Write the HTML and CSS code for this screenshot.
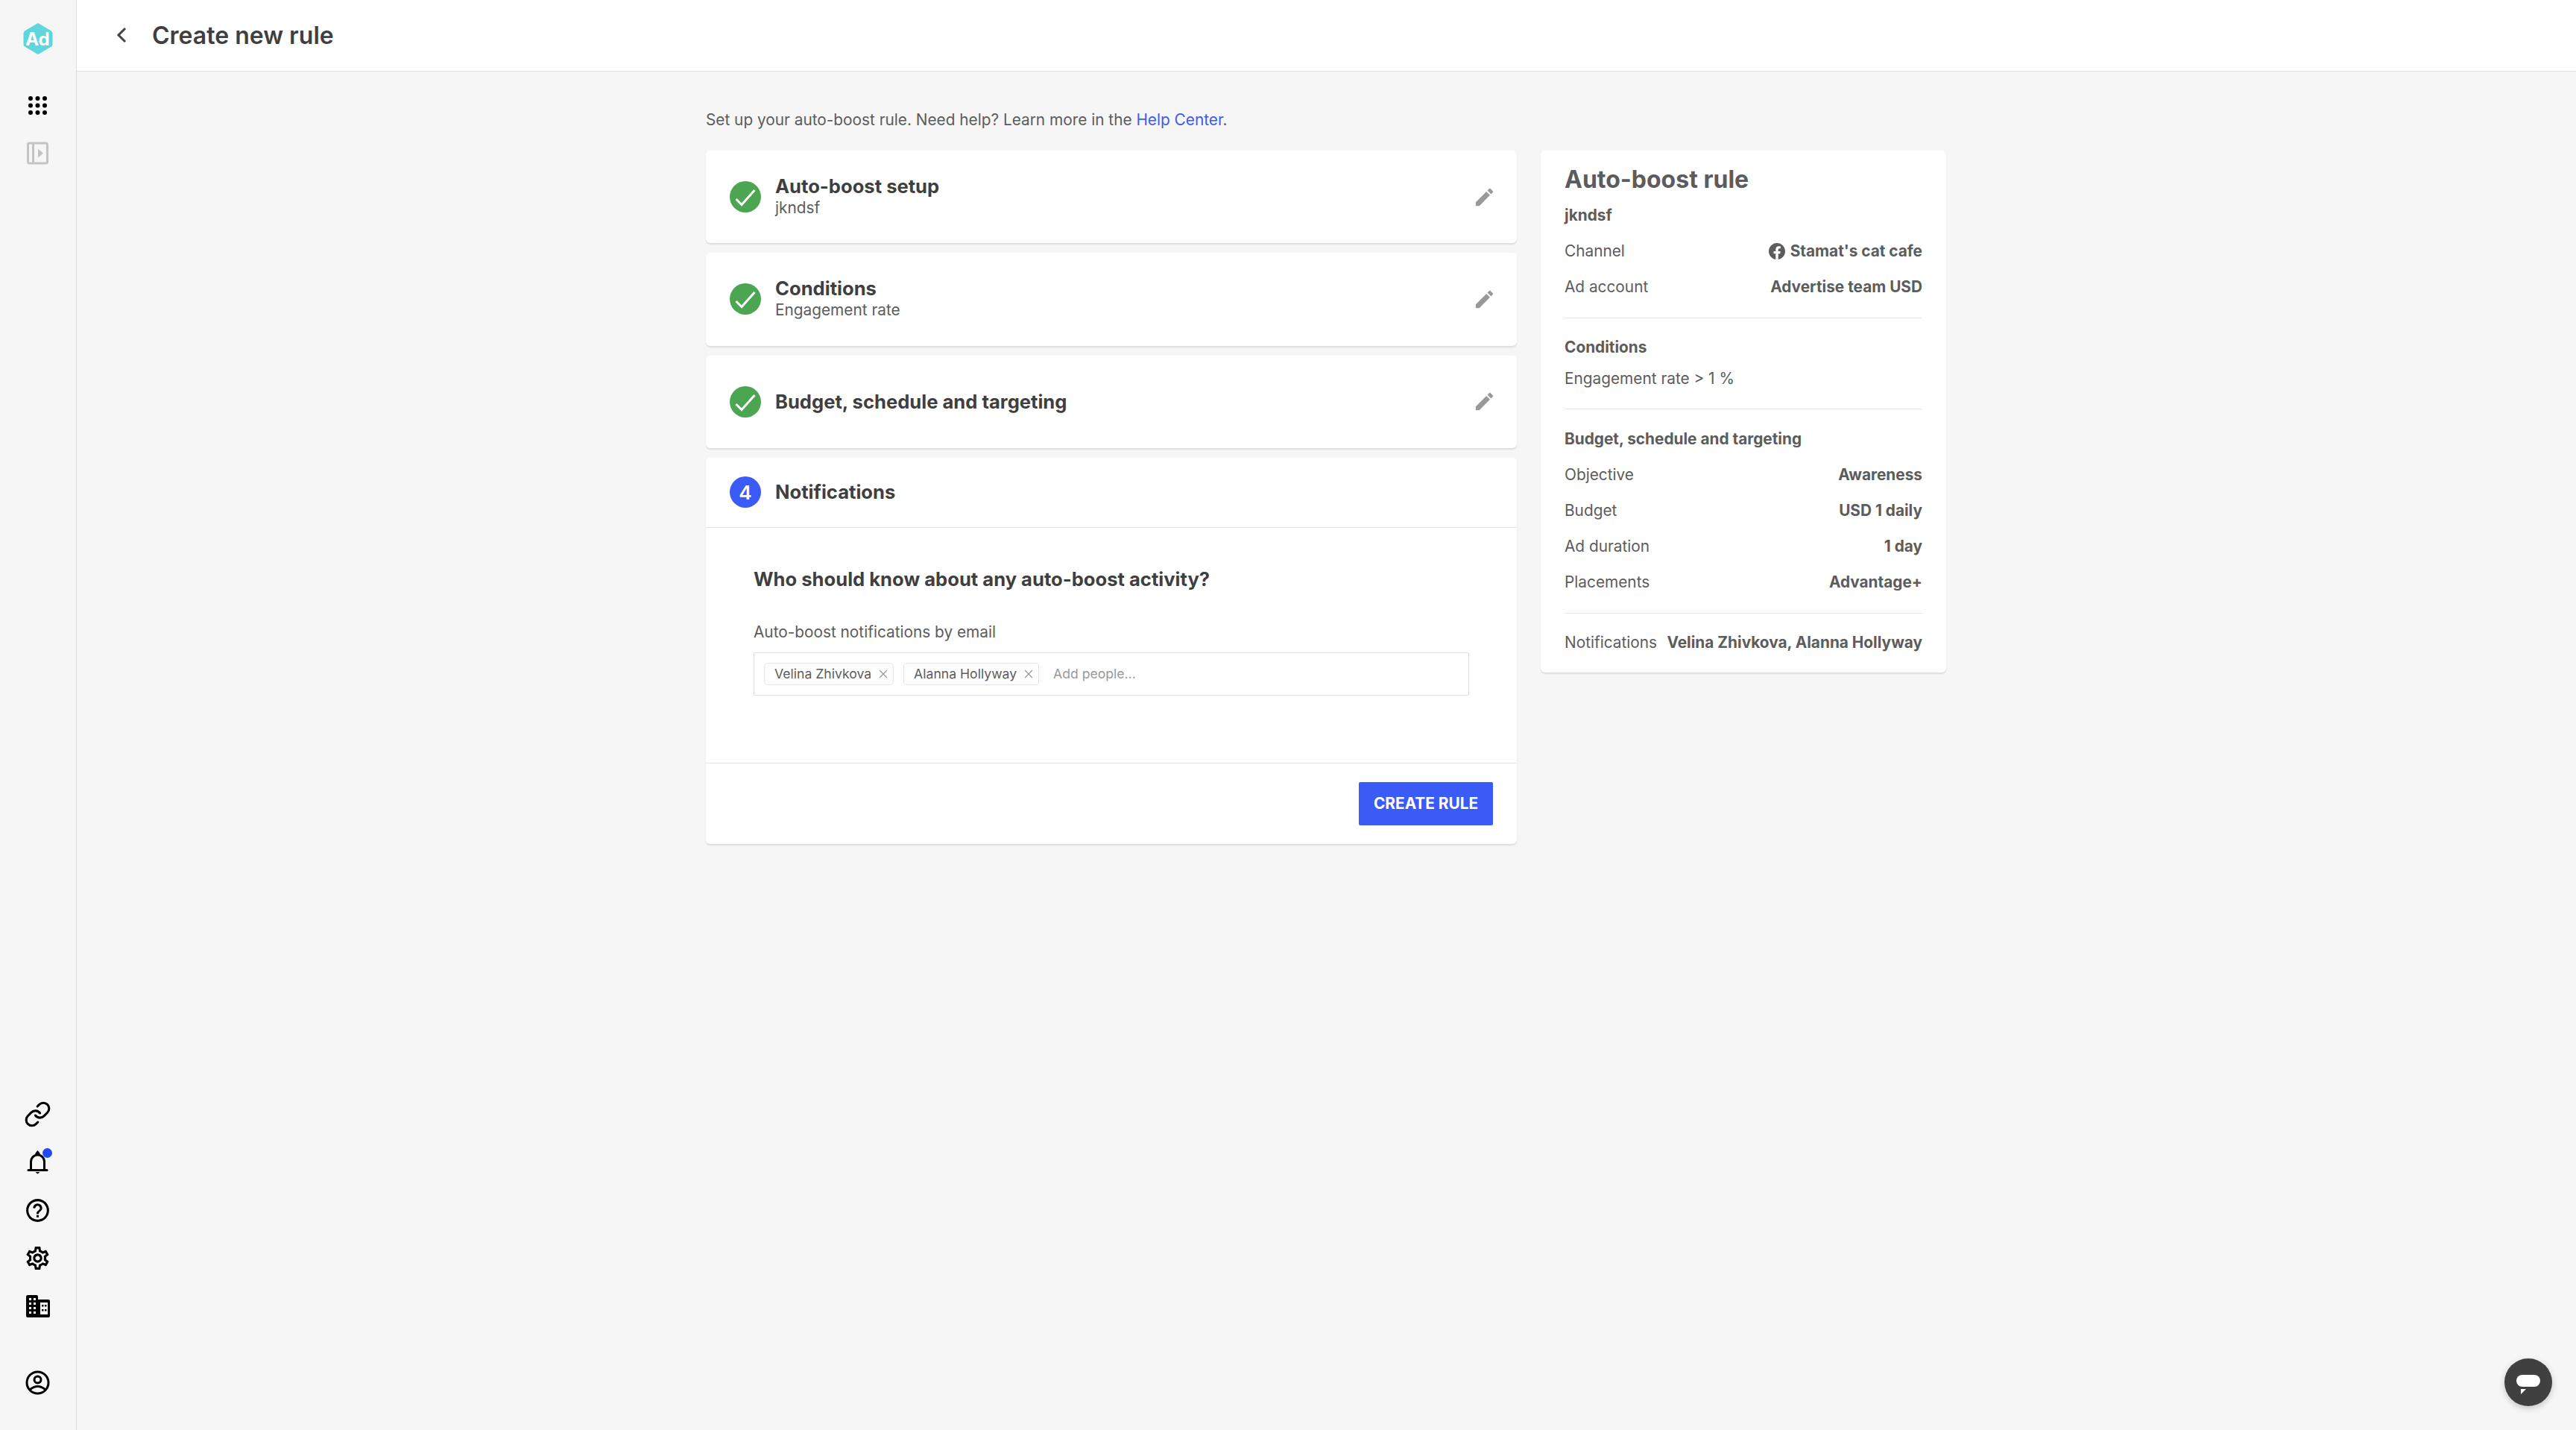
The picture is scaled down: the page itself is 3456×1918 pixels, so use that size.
FILE: index.html
```html
<!DOCTYPE html>
<html lang="en">
<head>
    <meta charset="UTF-8">
    <title>Create new rule</title>
    <link rel="stylesheet" href="styles.css">
</head>
<body>
    <aside class="sidebar">
        <div class="logo">
            <svg class="logo-hex" width="40" height="44" viewBox="0 0 40 44"><path d="M20 2 L37 12 Q38.500 12.900 38.500 14.500 V29.500 Q38.500 31.100 37 32 L20 42 L3 32 Q1.500 31.100 1.500 29.500 V14.500 Q1.500 12.900 3 12 Z" fill="#5fd6de" stroke="#5fd6de" stroke-width="2" stroke-linejoin="round"/></svg>
            <span class="logo-text">Ad</span>
        </div>
        <div class="side-top">
            <svg class="side-icon" viewBox="0 0 37 37"><g fill="#000"><circle cx="9" cy="9" r="3"/><circle cx="18.500" cy="9" r="3"/><circle cx="28" cy="9" r="3"/><circle cx="9" cy="18.500" r="3"/><circle cx="18.500" cy="18.500" r="3"/><circle cx="28" cy="18.500" r="3"/><circle cx="9" cy="28" r="3"/><circle cx="18.500" cy="28" r="3"/><circle cx="28" cy="28" r="3"/></g></svg>
            <svg class="side-icon" viewBox="0 0 37 37"><rect x="5.500" y="5" width="26" height="27" rx="2" fill="none" stroke="#c4c4c4" stroke-width="3"/><path d="M12.500 5v27" stroke="#c4c4c4" stroke-width="3"/><path d="M19 12.500 L26 18.500 L19 24.500 Z" fill="#c4c4c4"/></svg>
        </div>
        <div class="side-bottom">
            <svg class="side-icon" viewBox="0 0 24 24"><g fill="none" stroke="#000" stroke-width="2" stroke-linecap="round" stroke-linejoin="round"><path d="M10 13a5 5 0 0 0 7.540.540l3-3a5 5 0 0 0-7.070-7.070l-1.720 1.710"/><path d="M14 11a5 5 0 0 0-7.540-.540l-3 3a5 5 0 0 0 7.070 7.070l1.710-1.710"/></g></svg>
            <div class="bell-wrap">
                <svg class="side-icon" viewBox="0 0 37 37"><g fill="none" stroke="#000" stroke-width="3"><path d="M9.500 29 V18 A9 9 0 0 1 27.500 18 V29"/><path d="M6 29.500 H31" stroke-linecap="round"/></g><path d="M16 7.500 L18.500 4 L21 7.500 Z" fill="#000" stroke="#000" stroke-width="1.500" stroke-linejoin="round"/><path d="M15.500 32 H21.500 L18.500 34.500 Z" fill="#000"/></svg>
                <span class="bell-dot"></span>
            </div>
            <svg class="side-icon" viewBox="0 0 24 24"><path d="M11 18h2v-2h-2v2zm1-16C6.480 2 2 6.480 2 12s4.480 10 10 10 10-4.480 10-10S17.520 2 12 2zm0 18c-4.410 0-8-3.590-8-8s3.590-8 8-8 8 3.590 8 8-3.590 8-8 8zm0-14c-2.210 0-4 1.790-4 4h2c0-1.100.900-2 2-2s2 .900 2 2c0 2-3 1.750-3 5h2c0-2.250 3-2.500 3-5 0-2.210-1.790-4-4-4z"/></svg>
            <svg class="side-icon" viewBox="0 0 24 24"><path d="M19.430 12.980c.040-.320.070-.640.070-.980 0-.340-.030-.660-.070-.980l2.110-1.650c.190-.150.240-.420.120-.640l-2-3.460c-.090-.160-.260-.250-.440-.250-.060 0-.120.010-.170.030l-2.490 1c-.520-.400-1.080-.730-1.690-.980l-.380-2.650C14.460 2.180 14.250 2 14 2h-4c-.250 0-.460.180-.490.420l-.380 2.650c-.610.250-1.170.590-1.690.980l-2.490-1c-.060-.020-.120-.030-.180-.030-.170 0-.340.090-.430.250l-2 3.460c-.130.220-.070.490.120.640l2.110 1.650c-.040.320-.070.650-.070.980 0 .330.030.660.070.980l-2.110 1.650c-.190.150-.240.420-.120.640l2 3.460c.090.160.260.250.440.250.060 0 .120-.010.170-.030l2.490-1c.520.400 1.080.730 1.690.980l.380 2.650c.030.240.240.420.490.420h4c.250 0 .460-.180.490-.420l.380-2.650c.610-.250 1.170-.590 1.690-.980l2.490 1c.060.020.120.030.180.030.170 0 .340-.090.430-.250l2-3.460c.120-.220.070-.490-.120-.640l-2.110-1.650zm-1.980-1.710c.040.310.050.520.050.730 0 .210-.020.430-.050.730l-.140 1.130.890.700 1.080.840-.700 1.210-1.270-.510-1.040-.420-.900.680c-.430.320-.840.560-1.250.730l-1.060.430-.160 1.130-.200 1.350h-1.400l-.190-1.350-.160-1.130-1.060-.430c-.430-.180-.830-.410-1.230-.710l-.910-.700-1.060.430-1.270.510-.700-1.210 1.080-.840.890-.700-.140-1.130c-.030-.310-.050-.540-.050-.740s.020-.430.050-.730l.140-1.130-.890-.700-1.080-.840.700-1.210 1.270.510 1.040.420.900-.680c.430-.320.840-.560 1.250-.730l1.060-.430.160-1.130.200-1.350h1.390l.190 1.350.160 1.130 1.060.430c.430.180.830.410 1.230.710l.910.700 1.060-.430 1.270-.510.700 1.210-1.070.850-.890.700.140 1.130zM12 8c-2.210 0-4 1.790-4 4s1.790 4 4 4 4-1.790 4-4-1.790-4-4-4zm0 6c-1.100 0-2-.900-2-2s.900-2 2-2 2 .900 2 2-.900 2-2 2z"/></svg>
            <svg class="side-icon" viewBox="0 0 37 37"><path d="M3 5.500 Q3 3 5.500 3 H17 Q19 3 19 5 V9 H33 Q35 9 35 11 V31 Q35 33 33 33 H5 Q3 33 3 31 Z" fill="#000"/><g fill="#f6f6f6"><rect x="7" y="7" width="3" height="3"/><rect x="13" y="7" width="3" height="3"/><rect x="7" y="13" width="3" height="3"/><rect x="13" y="13" width="3" height="3"/><rect x="7" y="19" width="3" height="3"/><rect x="13" y="19" width="3" height="3"/><rect x="7" y="25" width="3" height="3"/><rect x="13" y="25" width="3" height="3"/><rect x="22" y="13" width="10" height="16"/></g><g fill="#000"><rect x="24" y="16" width="2.500" height="2.500"/><rect x="28" y="16" width="2.500" height="2.500"/><rect x="24" y="22" width="2.500" height="2.500"/><rect x="28" y="22" width="2.500" height="2.500"/></g></svg>
            <svg class="side-icon side-user" viewBox="0 0 37 37"><g fill="none" stroke="#000" stroke-width="3"><circle cx="18.500" cy="18.500" r="14.500"/><circle cx="18.500" cy="14.500" r="4.500"/><path d="M8 28 Q18.500 19 29 28"/></g></svg>
        </div>
    </aside>

    <div class="page">
        <header class="topbar">
            <svg class="back" width="16" height="24" viewBox="0 0 16 24"><path d="M13 3 L4 12 L13 21" fill="none" stroke="#444" stroke-width="3"/></svg>
            <h1>Create new rule</h1>
        </header>

        <main class="content">
            <div class="left-col">
                <p class="intro">Set up your auto-boost rule. Need help? Learn more in the <a href="#">Help Center</a>.</p>

                <section class="card step">
                    <svg class="badge" width="42" height="42" viewBox="0 0 42 42"><circle cx="21" cy="21" r="21" fill="#4ca550"/><path d="M8.500 24 L16 31.500 L33.500 12" fill="none" stroke="#fff" stroke-width="3"/></svg>
                    <div class="step-text">
                        <div class="step-title">Auto-boost setup</div>
                        <div class="step-sub">jkndsf</div>
                    </div>
                    <svg class="edit" width="31" height="31" viewBox="0 0 24 24"><path d="M3 17.250V21h3.750L17.810 9.940l-3.750-3.750L3 17.250zM20.710 7.040c.390-.390.390-1.020 0-1.410l-2.340-2.340c-.390-.390-1.020-.390-1.410 0l-1.830 1.830 3.750 3.750 1.830-1.830z"/></svg>
                </section>

                <section class="card step">
                    <svg class="badge" width="42" height="42" viewBox="0 0 42 42"><circle cx="21" cy="21" r="21" fill="#4ca550"/><path d="M8.500 24 L16 31.500 L33.500 12" fill="none" stroke="#fff" stroke-width="3"/></svg>
                    <div class="step-text">
                        <div class="step-title">Conditions</div>
                        <div class="step-sub">Engagement rate</div>
                    </div>
                    <svg class="edit" width="31" height="31" viewBox="0 0 24 24"><path d="M3 17.250V21h3.750L17.810 9.940l-3.750-3.750L3 17.250zM20.710 7.040c.390-.390.390-1.020 0-1.410l-2.340-2.340c-.390-.390-1.020-.390-1.410 0l-1.830 1.830 3.750 3.750 1.830-1.830z"/></svg>
                </section>

                <section class="card step">
                    <svg class="badge" width="42" height="42" viewBox="0 0 42 42"><circle cx="21" cy="21" r="21" fill="#4ca550"/><path d="M8.500 24 L16 31.500 L33.500 12" fill="none" stroke="#fff" stroke-width="3"/></svg>
                    <div class="step-text step-single">
                        <div class="step-title">Budget, schedule and targeting</div>
                    </div>
                    <svg class="edit" width="31" height="31" viewBox="0 0 24 24"><path d="M3 17.250V21h3.750L17.810 9.940l-3.750-3.750L3 17.250zM20.710 7.040c.390-.390.390-1.020 0-1.410l-2.340-2.340c-.390-.390-1.020-.390-1.410 0l-1.830 1.830 3.750 3.750 1.830-1.830z"/></svg>
                </section>

                <section class="card notif">
                    <div class="notif-head">
                        <span class="num-badge">4</span>
                        <div class="step-title">Notifications</div>
                    </div>
                    <div class="notif-body">
                        <h2>Who should know about any auto-boost activity?</h2>
                        <div class="field-label">Auto-boost notifications by email</div>
                        <div class="people-input">
                            <span class="chip">Velina Zhivkova<svg width="12" height="12" viewBox="0 0 12 12"><path d="M1 1 L11 11 M11 1 L1 11" stroke="#999" stroke-width="1.300"/></svg></span>
                            <span class="chip">Alanna Hollyway<svg width="12" height="12" viewBox="0 0 12 12"><path d="M1 1 L11 11 M11 1 L1 11" stroke="#999" stroke-width="1.300"/></svg></span>
                            <span class="placeholder">Add people...</span>
                        </div>
                    </div>
                    <div class="notif-foot">
                        <button class="primary">CREATE RULE</button>
                    </div>
                </section>
            </div>

            <aside class="card summary">
                <h3>Auto-boost rule</h3>
                <div class="sum-row"><b>jkndsf</b></div>
                <div class="sum-row"><span>Channel</span><b class="with-icon"><svg width="22" height="22" viewBox="0 0 24 24"><path fill="#5c5c5c" d="M24 12.070C24 5.400 18.630 0 12 0S0 5.400 0 12.070c0 6.030 4.390 11.020 10.130 11.930v-8.440H7.080v-3.490h3.050V9.410c0-3.020 1.790-4.690 4.530-4.690 1.310 0 2.690.240 2.690.240v2.970h-1.510c-1.490 0-1.960.930-1.960 1.880v2.260h3.330l-.530 3.490h-2.800V24C19.610 23.090 24 18.100 24 12.070z"/></svg>Stamat's cat cafe</b></div>
                <div class="sum-row"><span>Ad account</span><b>Advertise team USD</b></div>
                <hr>
                <div class="sum-head"><b>Conditions</b></div>
                <div class="sum-plain"><span>Engagement rate &gt; 1 %</span></div>
                <hr class="hr-wide">
                <div class="sum-head sum-head-gap"><b>Budget, schedule and targeting</b></div>
                <div class="sum-row"><span>Objective</span><b>Awareness</b></div>
                <div class="sum-row"><span>Budget</span><b>USD 1 daily</b></div>
                <div class="sum-row"><span>Ad duration</span><b>1 day</b></div>
                <div class="sum-row"><span>Placements</span><b>Advantage+</b></div>
                <hr>
                <div class="sum-row"><span>Notifications</span><b>Velina Zhivkova, Alanna Hollyway</b></div>
            </aside>
        </main>
    </div>

    <div class="chat">
        <svg width="34" height="34" viewBox="0 0 34 34"><rect x="1" y="7" width="32" height="16" rx="8" fill="#fff"/><path d="M7 26 H14 L7 33 Z" fill="#fff"/></svg>
    </div>
</body>
</html>
```

FILE: styles.css
```css
*{
    margin: 0;
    padding: 0;
    box-sizing: border-box;
}
html, body{
    height: 100%;
}
body{
    display: flex;
    background-color: #f6f6f6;
    font-family: Inter, "Liberation Sans", sans-serif;
    font-size: 20.800px;
    color: #3f3f3f;
    overflow: hidden;
}

/* sidebar */
.sidebar{
    width: 103px;
    flex-shrink: 0;
    height: 100%;
    border-right: 1px solid #dcdcdc;
    display: flex;
    flex-direction: column;
    align-items: center;
    padding-top: 30px;
    padding-bottom: 45px;
    padding-right: 1px;
}
.logo{
    width: 40px;
    height: 44px;
    display: grid;
    place-items: center;
}
.logo-hex{
    grid-area: 1 / 1;
}
.logo-text{
    grid-area: 1 / 1;
    color: #fff;
    font-size: 24px;
    font-weight: 700;
}
.side-icon{
    display: block;
    width: 37px;
    height: 37px;
}
.side-top{
    margin-top: 49px;
    display: flex;
    flex-direction: column;
    gap: 27px;
}
.side-bottom{
    margin-top: auto;
    display: flex;
    flex-direction: column;
    gap: 27.500px;
}
.side-user{
    margin-top: 38px;
}
.bell-wrap{
    position: relative;
}
.bell-dot{
    position: absolute;
    top: 0;
    right: -1px;
    width: 13px;
    height: 13px;
    border-radius: 50%;
    background-color: #2249f5;
}

/* top bar */
.page{
    flex: 1;
    min-width: 0;
}
.topbar{
    height: 96px;
    background-color: #fff;
    border-bottom: 1px solid #e4e4e4;
    display: flex;
    align-items: center;
    padding-left: 52px;
}
.topbar h1{
    margin-left: 33px;
    font-size: 32px;
    font-weight: 600;
    color: #3f3f3f;
}
.back{
    position: relative;
    top: -1px;
}

/* content */
.content{
    display: flex;
    justify-content: center;
    align-items: flex-start;
    gap: 32px;
    padding-right: 1px;
}
.left-col{
    width: 1088px;
}
.intro{
    height: 106px;
    line-height: 30px;
    padding-top: 50px;
    color: #5c5c5c;
}
.intro a{
    color: #3b5bf6;
    text-decoration: none;
}
.card{
    background-color: #fff;
    border-radius: 6px;
    box-shadow: 0 2px 2px rgba(0,0,0,.1);
}

.step{
    height: 124.330px;
    margin-bottom: 13px;
    display: flex;
    align-items: center;
    padding: 0 28px 0 32px;
}
.badge{
    flex-shrink: 0;
}
.step-text{
    margin-left: 19px;
    flex: 1;
    padding-bottom: 2px;
}
.step-single{
    padding-bottom: 0;
}
.step-title{
    font-size: 25.600px;
    font-weight: 700;
    line-height: 32px;
    color: #3f3f3f;
}
.step-sub{
    line-height: 26px;
    color: #5c5c5c;
}
.edit{
    fill: #999;
}

.notif-head{
    height: 94px;
    border-bottom: 1px solid #e4e4e4;
    display: flex;
    align-items: center;
    padding: 0 32px;
    gap: 19px;
}
.num-badge{
    width: 42px;
    height: 42px;
    border-radius: 50%;
    background-color: #3b5bf6;
    color: #fff;
    font-size: 26px;
    font-weight: 600;
    display: flex;
    align-items: center;
    justify-content: center;
}
.notif-body{
    height: 316px;
    padding: 50px 64px 0;
    border-bottom: 1px solid #e4e4e4;
}
.notif-body h2{
    font-size: 25.600px;
    font-weight: 700;
    line-height: 38px;
    color: #3f3f3f;
}
.field-label{
    margin-top: 37px;
    line-height: 30px;
    color: #5c5c5c;
}
.people-input{
    margin-top: 12px;
    height: 58px;
    border: 1px solid #dedede;
    border-radius: 2px;
    display: flex;
    align-items: center;
    padding-left: 13px;
    gap: 13px;
}
.chip{
    height: 30px;
    border: 1px solid #e4e4e4;
    border-radius: 5px;
    display: flex;
    align-items: center;
    gap: 10px;
    padding: 0 7px 0 13px;
    font-size: 17.600px;
    color: #5c5c5c;
}
.placeholder{
    margin-left: 6px;
    font-size: 17.600px;
    color: #999;
}
.notif-foot{
    height: 108px;
    display: flex;
    align-items: center;
    justify-content: flex-end;
    padding-right: 32px;
}
.primary{
    width: 180px;
    height: 58px;
    border: none;
    border-radius: 2px;
    background-color: #3b5bf6;
    color: #fff;
    font-family: inherit;
    font-size: 20.800px;
    font-weight: 700;
}

/* summary */
.summary{
    width: 544px;
    margin-top: 106px;
    padding: 16px 32px;
    color: #5c5c5c;
}
.summary h3{
    height: 47px;
    line-height: 46px;
    font-size: 32px;
    font-weight: 700;
}
.summary b{
    font-weight: 700;
    white-space: nowrap;
}
.summary hr{
    border: none;
    border-top: 1px solid #e4e4e4;
    margin: 17px 0 15px;
}
.summary hr.hr-wide{
    margin-top: 24px;
    margin-bottom: 0;
}
.sum-row{
    height: 48px;
    padding-bottom: 1px;
    display: flex;
    align-items: center;
    justify-content: space-between;
}
.with-icon{
    display: flex;
    align-items: center;
    gap: 7px;
}
.sum-head{
    height: 48px;
    padding-bottom: 1px;
    display: flex;
    align-items: center;
}
.sum-plain{
    height: 34px;
    display: flex;
    align-items: center;
}
.sum-head-gap{
    margin-top: 20px;
    height: 40px;
    margin-bottom: 4px;
}

/* chat */
.chat{
    position: fixed;
    right: 32px;
    bottom: 32px;
    width: 64px;
    height: 64px;
    border-radius: 50%;
    background-color: #404040;
    box-shadow: 0 3px 8px rgba(0,0,0,.2);
    display: flex;
    align-items: center;
    justify-content: center;
}
```
